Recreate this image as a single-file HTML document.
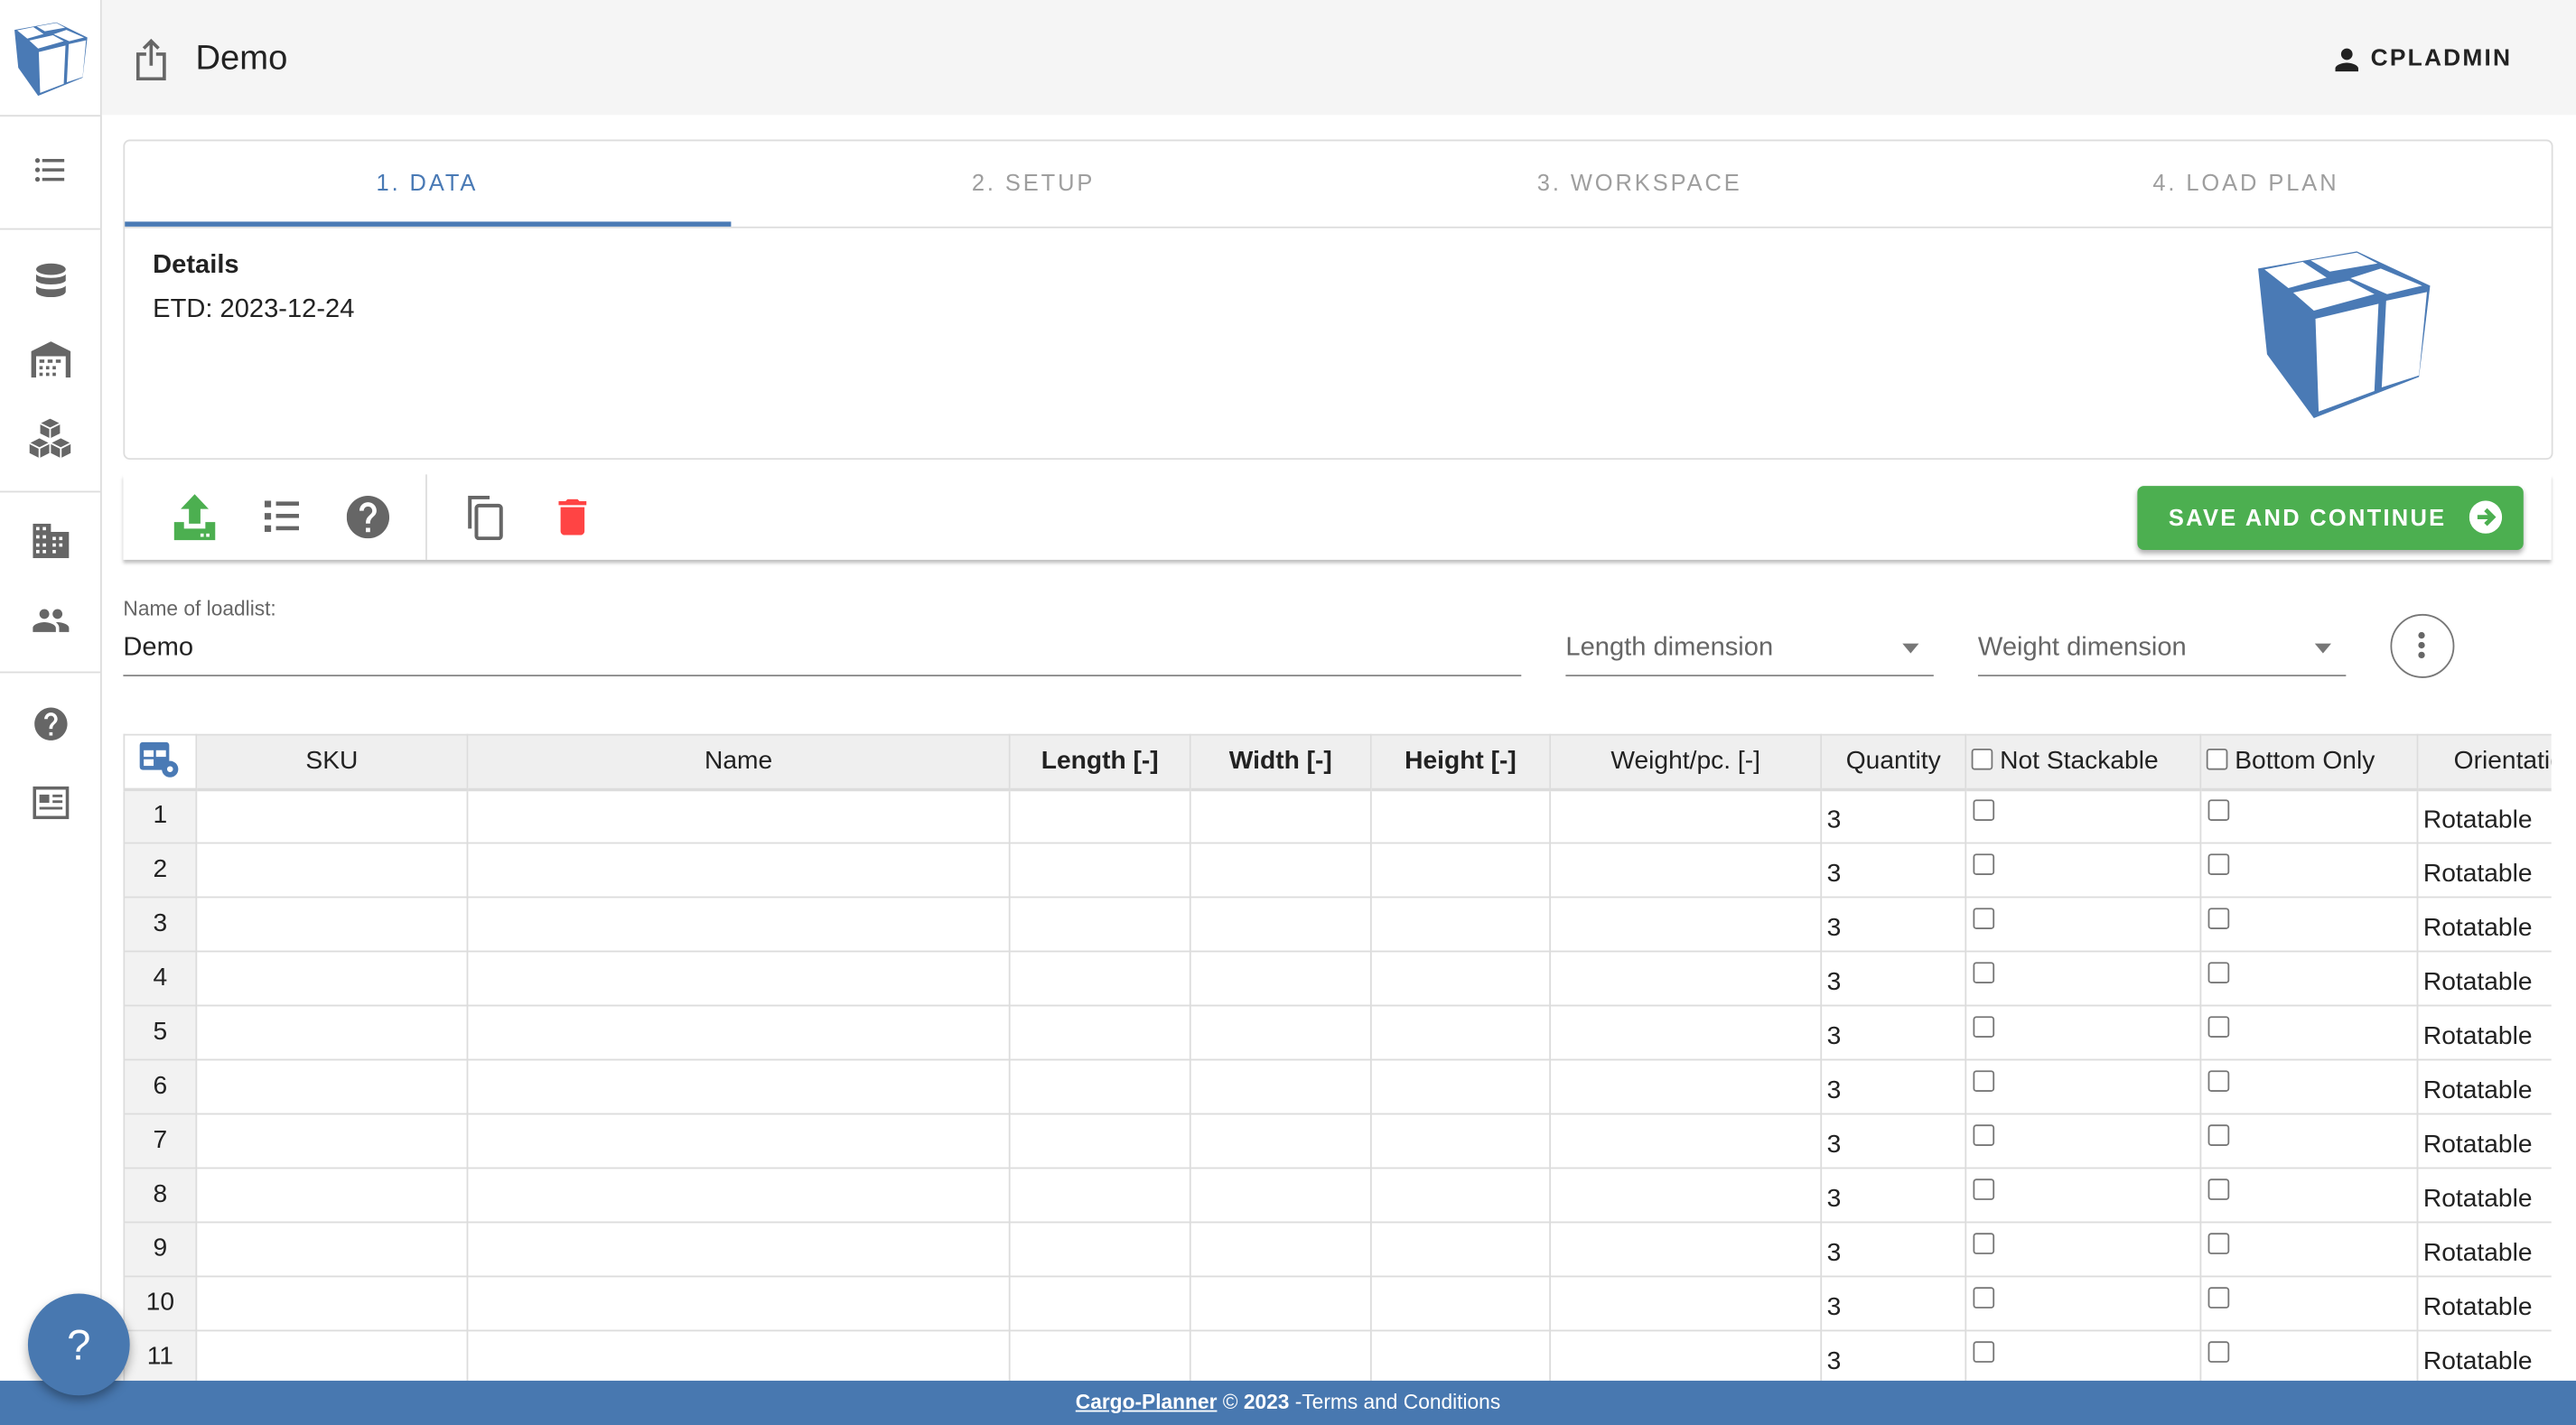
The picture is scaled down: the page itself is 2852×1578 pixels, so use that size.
<!DOCTYPE html>
<html><head><meta charset="utf-8">
<style>
html,body{margin:0;padding:0;width:2852px;height:1578px;overflow:hidden;background:#fff}
#w{position:absolute;left:0;top:0;width:1568px;height:868px;transform:scale(1.81888,1.81797);transform-origin:0 0;font-family:"Liberation Sans",sans-serif;color:#222;overflow:hidden}
.a{position:absolute}
.hr{position:absolute;left:0;width:61px;height:1px;background:#ddd}
.tab{position:absolute;top:103px;font-size:14px;letter-spacing:1.6px;color:#9e9e9e;transform:translateX(-50%)}
table{position:absolute;left:0;top:0;width:1516px;border-collapse:collapse;table-layout:fixed;font-size:15.5px}
td,th{border:1px solid #dcdcdc;height:32px;padding:0 3px;line-height:18px;white-space:nowrap;overflow:hidden;box-sizing:border-box}
tr{height:33px}
th{background:#efefef;font-weight:normal;text-align:center;border-bottom:2px solid #dcdcdc}
td.n{background:#f2f2f2;text-align:center}
td.q{text-align:left;padding-top:5px}
.cb{display:inline-block;width:11px;height:11px;border:1px solid #777;border-radius:2px;vertical-align:-1px;background:#fff}
td .cb{margin-left:1px;vertical-align:3px}
</style></head><body><div id="w">
<!-- sidebar -->
<div class="a" style="left:61px;top:0;width:1px;height:868px;background:#ddd"></div>
<div class="hr" style="top:70px"></div><div class="hr" style="top:139px"></div><div class="hr" style="top:299px"></div><div class="hr" style="top:409px"></div>
<svg class="a" style="left:8px;top:13px" width="46" height="46" viewBox="560 140 560 570" preserveAspectRatio="none">
<polygon fill="#4a7ab5" points="570,205 880,148 1110,262 1075,565 745,702 598,490"/>
<g fill="#fff"><polygon points="590,208 710,183 785,235 665,270"/><polygon points="735,178 880,152 945,188 795,215"/><polygon points="680,285 855,245 935,290 745,345"/><polygon points="860,237 955,205 1085,262 975,290"/><polygon points="750,372 948,322 935,612 760,680"/><polygon points="972,312 1100,283 1075,560 958,600"/></g></svg>
<svg class="a" style="left:19px;top:92px" width="23" height="23" viewBox="0 0 24 24" fill="#666"><path d="M4 10.5c-.83 0-1.5.67-1.5 1.5s.67 1.5 1.5 1.5 1.5-.67 1.5-1.5-.67-1.5-1.5-1.5zm0-6c-.83 0-1.5.67-1.5 1.5S3.170 7.5 4 7.5 5.5 6.83 5.5 6 4.83 4.5 4 4.5zm0 12c-.83 0-1.5.68-1.5 1.5s.68 1.5 1.5 1.5 1.5-.68 1.5-1.5-.67-1.5-1.5-1.5zM7 19h14v-2H7v2zm0-6h14v-2H7v2zm0-8v2h14V5H7z"/></svg>
<svg class="a" style="left:21px;top:160px" width="20" height="22" viewBox="0 0 20 22" fill="#666"><ellipse cx="10" cy="4" rx="9" ry="3.5"/><path d="M1 7c2 3 16 3 18 0v4c-2 3-16 3-18 0z"/><path d="M1 14c2 3 16 3 18 0v3.5c0 2-4 3.5-9 3.5s-9-1.5-9-3.5z"/></svg>
<svg class="a" style="left:19px;top:208px" width="24" height="22" viewBox="0 0 24 22" fill="#666"><path d="M0 6L12 0 24 6V22H21V9H3V22H0z"/><rect x="5" y="11" width="3" height="2"/><rect x="10" y="11" width="3" height="2"/><rect x="15" y="11" width="3" height="2"/><rect x="5" y="15" width="2" height="2"/><rect x="9" y="15" width="2" height="2"/><rect x="13" y="15" width="2" height="2"/><rect x="5" y="19" width="2" height="2"/><rect x="9" y="19" width="2" height="2"/><rect x="13" y="19" width="2" height="2"/></svg>
<svg class="a" style="left:17px;top:255px" width="27" height="25" viewBox="0 0 27 25" fill="#666"><path d="M13.5 0l6 3v6l-6 3-6-3V3z"/><path d="M7 12l6 3v6l-6 3-6-3v-6z"/><path d="M20 12l6 3v6l-6 3-6-3v-6z"/><g stroke="#fff" stroke-width="1" fill="none"><path d="M7.5 3l6 3 6-3M13.5 6v6M1 15l6 3 6-3M7 18v6M14 15l6 3 6-3M20 18v6"/></g></svg>
<svg class="a" style="left:20px;top:319px" width="22" height="21" viewBox="0 0 22 21" fill="#666"><path d="M0 0h11v5h11v16H0z"/><g fill="#fff"><rect x="2" y="2" width="2" height="2"/><rect x="6" y="2" width="2" height="2"/><rect x="2" y="7" width="2" height="2"/><rect x="6" y="7" width="2" height="2"/><rect x="12" y="8" width="2" height="2"/><rect x="16" y="8" width="2" height="2"/><rect x="2" y="12" width="2" height="2"/><rect x="6" y="12" width="2" height="2"/><rect x="12" y="12" width="2" height="2"/><rect x="16" y="12" width="2" height="2"/><rect x="2" y="16" width="2" height="2"/><rect x="6" y="16" width="2" height="2"/><rect x="12" y="16" width="2" height="2"/></g></svg>
<svg class="a" style="left:19px;top:366px" width="24" height="24" viewBox="0 0 24 24" fill="#666"><path d="M16 11c1.66 0 2.99-1.34 2.99-3S17.66 5 16 5c-1.66 0-3 1.34-3 3s1.34 3 3 3zm-8 0c1.66 0 2.99-1.34 2.990-3S9.66 5 8 5C6.34 5 5 6.34 5 8s1.34 3 3 3zm0 2c-2.33 0-7 1.17-7 3.5V19h14v-2.5c0-2.33-4.670-3.5-7-3.5zm8 0c-.29 0-.62.02-.97.05 1.16.84 1.97 1.97 1.97 3.45V19h6v-2.5c0-2.33-4.67-3.5-7-3.5z"/></svg>
<svg class="a" style="left:19px;top:429px" width="24" height="24" viewBox="0 0 24 24" fill="#666"><path d="M12 2C6.48 2 2 6.48 2 12s4.48 10 10 10 10-4.48 10-10S17.52 2 12 2zm1 17h-2v-2h2v2zm2.07-7.75l-.9.92C13.45 12.9 13 13.5 13 15h-2v-.5c0-1.1.45-2.1 1.17-2.83l1.24-1.26c.37-.36.59-.86.59-1.410 0-1.1-.9-2-2-2s-2 .9-2 2H8c0-2.21 1.79-4 4-4s4 1.79 4 4c0 .88-.36 1.68-.93 2.25z"/></svg>
<svg class="a" style="left:20px;top:479px" width="22" height="20" viewBox="0 0 22 20"><rect x="1" y="1" width="20" height="18" fill="none" stroke="#666" stroke-width="2"/><g fill="#666"><rect x="4" y="5" width="6" height="5"/><rect x="12" y="5" width="6" height="1.6"/><rect x="12" y="8.5" width="6" height="1.6"/><rect x="4" y="12.5" width="14" height="1.6"/></g></svg>
<!-- header -->
<div class="a" style="left:62px;top:0;width:1506px;height:70px;background:#f5f5f5"></div>
<svg class="a" style="left:82px;top:23px" width="20" height="26" viewBox="0 0 20 26" fill="none" stroke="#666" stroke-width="2"><path d="M7 10H2v15h16V10h-5"/><path d="M10 17V2M5.5 6.5L10 2l4.5 4.5"/></svg>
<div class="a" style="left:119px;top:24px;font-size:21px;color:#222">Demo</div>
<svg class="a" style="left:1418px;top:26px" width="21" height="21" viewBox="0 0 24 24" fill="#222"><path d="M12 12c2.21 0 4-1.79 4-4s-1.79-4-4-4-4 1.79-4 4 1.79 4 4 4zm0 2c-2.67 0-8 1.34-8 4v2h16v-2c0-2.66-5.33-4-8-4z"/></svg>
<div class="a" style="left:1443px;top:28px;font-size:14.5px;font-weight:bold;letter-spacing:1.2px;color:#222">CPLADMIN</div>
<!-- card -->
<div class="a" style="left:75px;top:85px;width:1477px;height:193px;border:1px solid #ddd;border-radius:4px;background:#fff"></div>
<div class="a" style="left:76px;top:138px;width:1477px;height:1px;background:#ddd"></div>
<div class="a" style="left:76px;top:135px;width:369px;height:3px;background:#4a7ab5"></div>
<div class="tab" style="left:260px;color:#4a7ab5">1. DATA</div>
<div class="tab" style="left:629px">2. SETUP</div>
<div class="tab" style="left:998px">3. WORKSPACE</div>
<div class="tab" style="left:1367px">4. LOAD PLAN</div>
<div class="a" style="left:93px;top:153px;font-size:16px;font-weight:bold">Details</div>
<div class="a" style="left:93px;top:180px;font-size:16px">ETD: 2023-12-24</div>
<svg class="a" style="left:1264px;top:126px" width="304" height="231" viewBox="0 0 1568 1260" preserveAspectRatio="none">
<polygon fill="#4a7ab5" points="570,205 880,148 1110,262 1075,565 745,702 598,490"/>
<g fill="#fff"><polygon points="590,208 710,183 785,235 665,270"/><polygon points="735,178 880,152 945,188 795,215"/><polygon points="680,285 855,245 935,290 745,345"/><polygon points="860,237 955,205 1085,262 975,290"/><polygon points="750,372 948,322 935,612 760,680"/><polygon points="972,312 1100,283 1075,560 958,600"/></g></svg>
<!-- toolbar -->
<div class="a" style="left:75px;top:289px;width:1478px;height:52px;background:#fff;box-shadow:0 2px 2px rgba(0,0,0,.25)"></div>
<div class="a" style="left:259px;top:289px;width:1px;height:52px;background:#ddd"></div>
<svg class="a" style="left:105px;top:300px" width="27" height="30" viewBox="0 0 27 30"><path fill="#4caf50" d="M13.5 1L22 10h-5v9h-7v-9H5z"/><path fill="#4caf50" d="M1 18h6v4h13v-4h6v11H1z"/><rect x="17" y="25" width="2" height="2" fill="#fff"/><rect x="20.5" y="25" width="2" height="2" fill="#fff"/></svg>
<svg class="a" style="left:161px;top:305px" width="21" height="19" viewBox="0 0 21 19" fill="#666"><rect x="0" y="0" width="4" height="4"/><rect x="0" y="7.5" width="4" height="4"/><rect x="0" y="15" width="4" height="4"/><rect x="7" y="0.5" width="14" height="2.5"/><rect x="7" y="8" width="14" height="2.5"/><rect x="7" y="15.5" width="14" height="2.5"/></svg>
<svg class="a" style="left:211px;top:302px" width="26" height="26" viewBox="2 2 20 20" fill="#666"><path d="M12 2C6.48 2 2 6.48 2 12s4.48 10 10 10 10-4.48 10-10S17.52 2 12 2zm1 17h-2v-2h2v2zm2.07-7.75l-.9.92C13.45 12.9 13 13.5 13 15h-2v-.5c0-1.1.45-2.1 1.17-2.83l1.24-1.26c.37-.36.59-.86.59-1.41 0-1.1-.9-2-2-2s-2 .9-2 2H8c0-2.21 1.79-4 4-4s4 1.79 4 4c0 .88-.36 1.68-.93 2.25z"/></svg>
<svg class="a" style="left:284px;top:302px" width="23" height="27" viewBox="0 0 23 27" fill="none" stroke="#666" stroke-width="2.2"><path d="M14 1H2v19"/><rect x="6" y="6" width="15" height="20" rx="1.5"/></svg>
<svg class="a" style="left:340px;top:304px" width="17" height="22" viewBox="5 3 14 18" fill="#f44"><path d="M6 19c0 1.1.9 2 2 2h8c1.1 0 2-.9 2-2V7H6v12zM19 4h-3.5l-1-1h-5l-1 1H5v2h14V4z"/></svg>
<div class="a" style="left:1301px;top:296px;width:235px;height:39px;background:#4caf50;border-radius:4px;box-shadow:0 2px 3px rgba(0,0,0,.3)"></div>
<div class="a" style="left:1320px;top:307px;font-size:14px;font-weight:bold;letter-spacing:1.25px;color:#fff">SAVE AND CONTINUE</div>
<svg class="a" style="left:1503px;top:305px" width="20" height="20" viewBox="0 0 20 20"><circle cx="10" cy="10" r="10" fill="#fff"/><path d="M5 10h9M10 5.5l4.5 4.5-4.5 4.5" stroke="#4caf50" stroke-width="2.6" fill="none"/></svg>
<!-- inputs -->
<div class="a" style="left:75px;top:364px;font-size:12.5px;color:#666">Name of loadlist:</div>
<div class="a" style="left:75px;top:386px;font-size:16px">Demo</div>
<div class="a" style="left:75px;top:411px;width:851px;height:1px;background:#888"></div>
<div class="a" style="left:953px;top:386px;font-size:16px;color:#666">Length dimension</div>
<div class="a" style="left:953px;top:411px;width:224px;height:1px;background:#888"></div>
<div class="a" style="left:1158px;top:392px;width:0;height:0;border-left:5px solid transparent;border-right:5px solid transparent;border-top:6px solid #777"></div>
<div class="a" style="left:1204px;top:386px;font-size:16px;color:#666">Weight dimension</div>
<div class="a" style="left:1204px;top:411px;width:224px;height:1px;background:#888"></div>
<div class="a" style="left:1409px;top:392px;width:0;height:0;border-left:5px solid transparent;border-right:5px solid transparent;border-top:6px solid #777"></div>
<div class="a" style="left:1455px;top:374px;width:37px;height:37px;border:1px solid #777;border-radius:50%"></div>
<svg class="a" style="left:1471px;top:384px" width="6" height="18" viewBox="0 0 6 18" fill="#666"><circle cx="3" cy="3" r="2"/><circle cx="3" cy="9" r="2"/><circle cx="3" cy="15" r="2"/></svg>
<!-- table -->
<div class="a" style="left:75px;top:447px;width:1478px;height:394px;overflow:hidden">
<table>
<colgroup><col style="width:44px"><col style="width:165px"><col style="width:330px"><col style="width:110px"><col style="width:110px"><col style="width:109px"><col style="width:165px"><col style="width:88px"><col style="width:143px"><col style="width:132px"><col style="width:120px"></colgroup>
<tr><th style="background:#fff"><svg width="25" height="23" viewBox="0 0 25 23" style="vertical-align:middle"><rect x="0" y="0" width="18" height="17" rx="2" fill="#4a7ab5"/><g fill="#fff"><rect x="2.5" y="5" width="6" height="4"/><rect x="10" y="5" width="6" height="4"/><rect x="2.5" y="10.5" width="6" height="4"/></g><circle cx="18.5" cy="16.5" r="5" fill="#4a7ab5"/><circle cx="18.5" cy="16.5" r="1.8" fill="#fff"/></svg></th><th>SKU</th><th>Name</th><th style="font-weight:bold">Length [-]</th><th style="font-weight:bold">Width [-]</th><th style="font-weight:bold">Height [-]</th><th>Weight/pc. [-]</th><th>Quantity</th><th style="text-align:left"><span class="cb"></span> Not Stackable</th><th style="text-align:left"><span class="cb"></span> Bottom Only</th><th>Orientation</th></tr>
<tr><td class="n">1</td><td></td><td></td><td></td><td></td><td></td><td></td><td class="q">3</td><td><span class="cb"></span></td><td><span class="cb"></span></td><td class="q">Rotatable</td></tr>
<tr><td class="n">2</td><td></td><td></td><td></td><td></td><td></td><td></td><td class="q">3</td><td><span class="cb"></span></td><td><span class="cb"></span></td><td class="q">Rotatable</td></tr>
<tr><td class="n">3</td><td></td><td></td><td></td><td></td><td></td><td></td><td class="q">3</td><td><span class="cb"></span></td><td><span class="cb"></span></td><td class="q">Rotatable</td></tr>
<tr><td class="n">4</td><td></td><td></td><td></td><td></td><td></td><td></td><td class="q">3</td><td><span class="cb"></span></td><td><span class="cb"></span></td><td class="q">Rotatable</td></tr>
<tr><td class="n">5</td><td></td><td></td><td></td><td></td><td></td><td></td><td class="q">3</td><td><span class="cb"></span></td><td><span class="cb"></span></td><td class="q">Rotatable</td></tr>
<tr><td class="n">6</td><td></td><td></td><td></td><td></td><td></td><td></td><td class="q">3</td><td><span class="cb"></span></td><td><span class="cb"></span></td><td class="q">Rotatable</td></tr>
<tr><td class="n">7</td><td></td><td></td><td></td><td></td><td></td><td></td><td class="q">3</td><td><span class="cb"></span></td><td><span class="cb"></span></td><td class="q">Rotatable</td></tr>
<tr><td class="n">8</td><td></td><td></td><td></td><td></td><td></td><td></td><td class="q">3</td><td><span class="cb"></span></td><td><span class="cb"></span></td><td class="q">Rotatable</td></tr>
<tr><td class="n">9</td><td></td><td></td><td></td><td></td><td></td><td></td><td class="q">3</td><td><span class="cb"></span></td><td><span class="cb"></span></td><td class="q">Rotatable</td></tr>
<tr><td class="n">10</td><td></td><td></td><td></td><td></td><td></td><td></td><td class="q">3</td><td><span class="cb"></span></td><td><span class="cb"></span></td><td class="q">Rotatable</td></tr>
<tr><td class="n">11</td><td></td><td></td><td></td><td></td><td></td><td></td><td class="q">3</td><td><span class="cb"></span></td><td><span class="cb"></span></td><td class="q">Rotatable</td></tr>
</table></div>
<!-- footer -->
<div class="a" style="left:0;top:841px;width:1568px;height:27px;background:#4878b0"></div>
<div class="a" style="left:0;top:847px;width:1568px;text-align:center;font-size:12.5px;color:#fff"><span style="text-decoration:underline;font-weight:bold">Cargo-Planner</span> © <b>2023</b> -Terms and Conditions</div>
<div class="a" style="left:17px;top:788px;width:62px;height:62px;border-radius:50%;background:#4878b0;box-shadow:0 3px 6px rgba(0,0,0,.35);color:#fff;font-size:26px;text-align:center;line-height:62px">?</div>
</div></body></html>
